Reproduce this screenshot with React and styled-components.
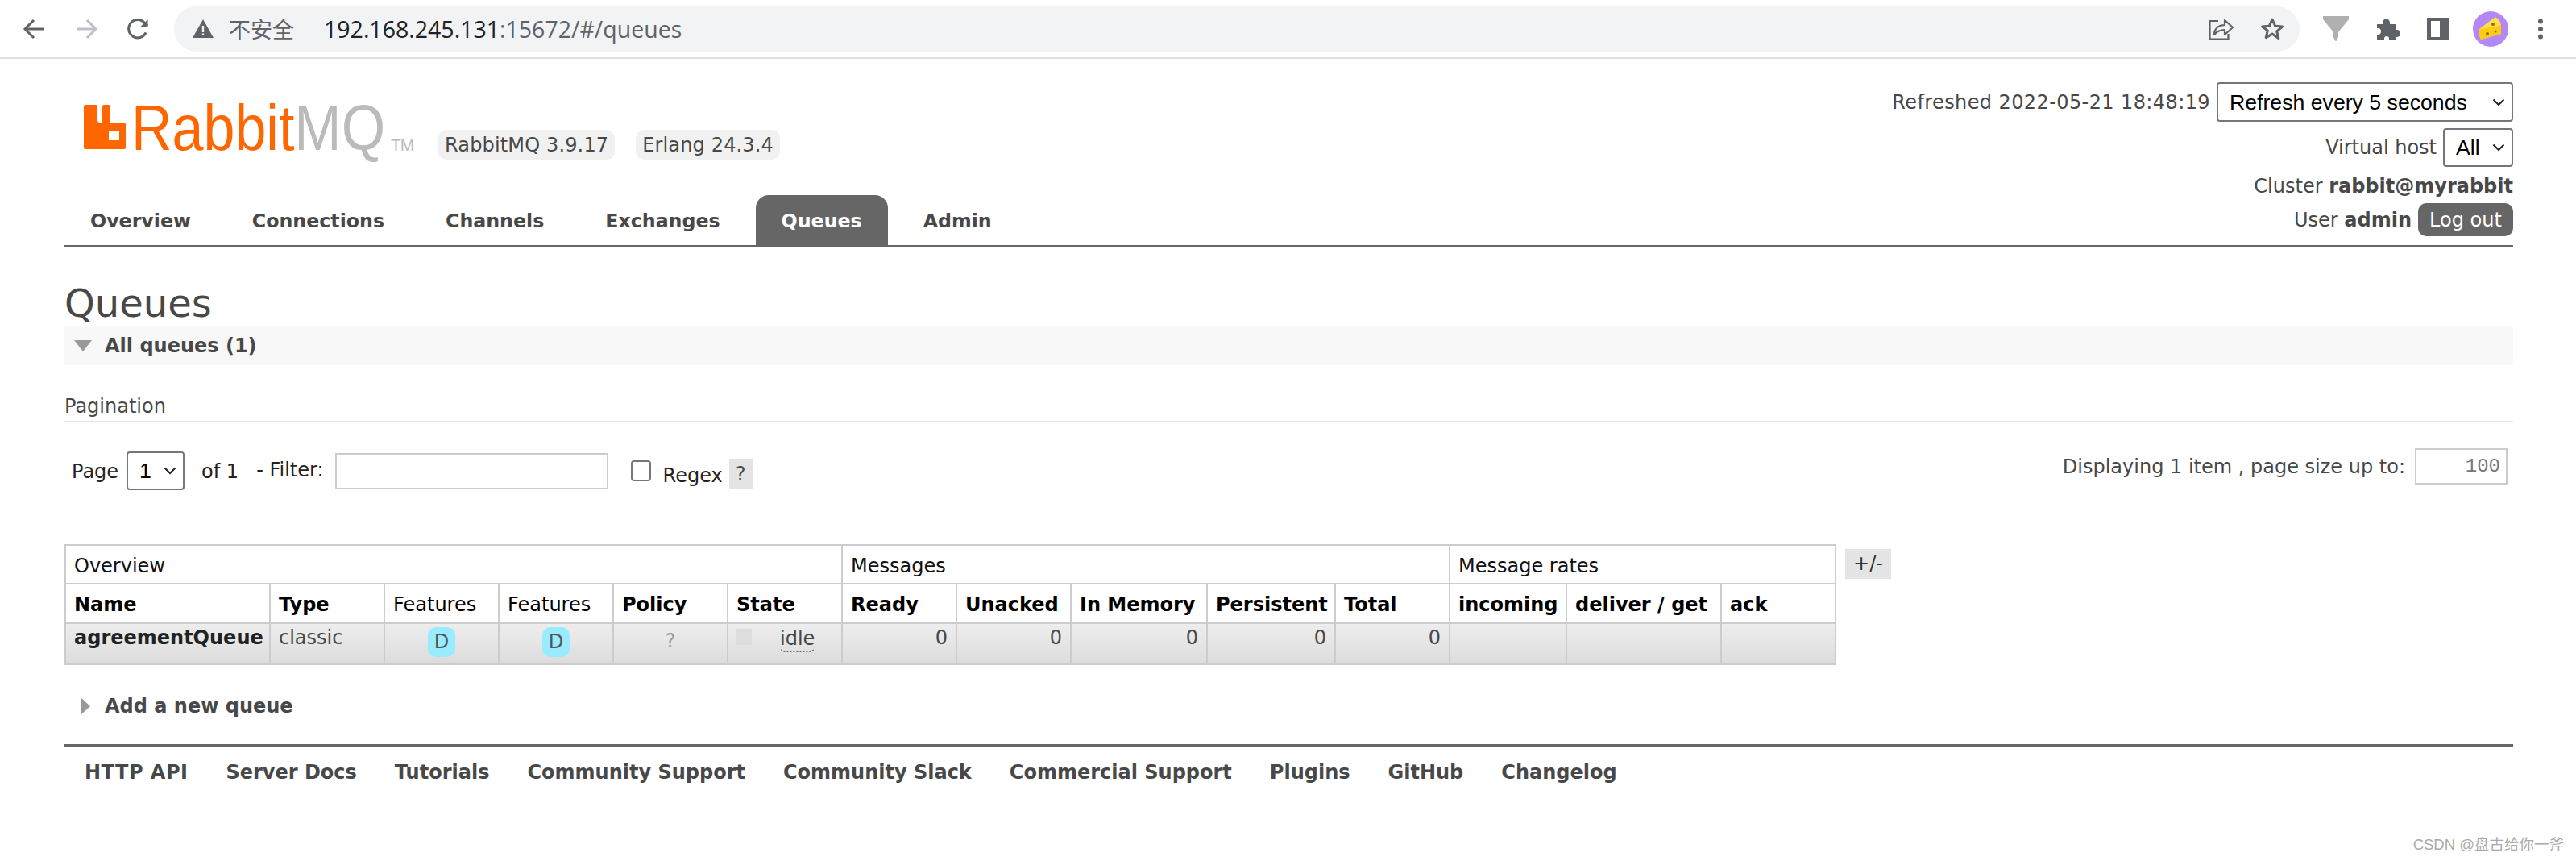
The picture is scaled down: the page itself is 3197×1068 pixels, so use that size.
import React from "react";
import styled, { createGlobalStyle } from "styled-components";

const Global = createGlobalStyle`
  html, body { margin: 0; padding: 0; background: #fff; }
  body { font-family: "DejaVu Sans", Verdana, sans-serif; font-size: 24px; color: #484848; width: 3197px; height: 1068px; overflow: hidden; position: relative; }
`;

const chevron = "url(\"data:image/svg+xml,%3Csvg xmlns='http://www.w3.org/2000/svg' width='16' height='10' viewBox='0 0 16 10'%3E%3Cpath d='M1.5 1.5 8 8l6.5-6.5' fill='none' stroke='%23222' stroke-width='2'/%3E%3C/svg%3E\")";

const ChromeBar = styled.div`
  height: 71px;
  border-bottom: 2px solid #e0e0e0;
  display: flex;
  align-items: center;
  padding-left: 28px;
  box-sizing: content-box;
`;
const NavIcon = styled.svg`
  width: ${p => p.$w || 30}px;
  height: ${p => p.$h || 28}px;
  margin-right: ${p => p.$gap || 34}px;
  flex: none;
`;
const Omnibox = styled.div`
  flex: none;
  height: 56px;
  width: 2638px;
  margin-left: -4px;
  border-radius: 28px;
  background: #f1f3f4;
  display: flex;
  align-items: center;
  padding-left: 23px;
  box-sizing: border-box;
`;
const Insecure = styled.span`
  font: 27px "Noto Sans CJK SC", sans-serif;
  color: #5f6368;
  margin-left: 19px;
  width: 84px;
  white-space: nowrap;
`;
const UrlSep = styled.i`
  display: block;
  width: 1px;
  height: 32px;
  background: #80868b;
  margin: 0 18px 0 15px;
`;
const Url = styled.span`
  font: 28.5px "Open Sans", sans-serif;
  color: #5f6368;
  white-space: nowrap;
  b { font-weight: 400; color: #202124; }
`;
const OmniRight = styled.div`
  margin-left: auto;
  display: flex;
  align-items: center;
  gap: 33px;
  padding-right: 19px;
`;
const ToolIcons = styled.div`
  display: flex;
  align-items: center;
  margin-left: 28px;
`;

const Page = styled.div`
  padding: 0 78px 0 80px;
`;
const Header = styled.header`
  display: flex;
  justify-content: space-between;
  height: 231px;
  border-bottom: 2px solid #666;
  box-sizing: content-box;
`;
const HeaderLeft = styled.div`
  display: flex;
  flex-direction: column;
  justify-content: space-between;
`;
const LogoRow = styled.div`
  display: flex;
  align-items: flex-start;
  padding: 57px 0 0 24px;
`;
const LogoMark = styled.svg`
  width: 52px;
  height: 55px;
  flex: none;
  margin-right: 7px;
`;
const Wordmark = styled.div`
  font-family: "Liberation Sans", sans-serif;
  font-size: 79px;
  line-height: 56px;
  margin-top: 1px;
  color: #f60;
  white-space: nowrap;
  width: 310px;
  transform: scaleX(0.886);
  transform-origin: left center;
  span { color: #bbb; }
`;
const Tm = styled.span`
  font-family: "Liberation Sans", sans-serif;
  font-size: 21px;
  color: #bbb;
  margin: 36px 0 0 12px;
  line-height: 28px;
  width: 59px;
  letter-spacing: -1px;
`;
const Badge = styled.span`
  background: #f1f1f1;
  border-radius: 10px;
  height: 37px;
  line-height: 38px;
  padding: 0 8px;
  font-size: 24px;
  letter-spacing: 0.15px;
  margin: 31px ${p => p.$mr || 0}px 0 0;
  white-space: nowrap;
`;
const Tabs = styled.nav`
  display: flex;
  gap: 12px;
`;
const Tab = styled.a`
  height: 62px;
  line-height: 64px;
  padding: 0 32px;
  font-size: 23.7px;
  font-weight: 700;
  border-radius: 16px 16px 0 0;
  color: ${p => (p.$active ? "#fff" : "#484848")};
  background: ${p => (p.$active ? "#666" : "transparent")};
`;
const HeaderRight = styled.div`
  display: flex;
  flex-direction: column;
  align-items: flex-end;
  padding-top: 29px;
`;
const MetaRow = styled.div`
  display: flex;
  align-items: center;
  justify-content: flex-end;
  gap: 8px;
  height: ${p => p.$h}px;
  margin-bottom: ${p => p.$mb || 0}px;
  letter-spacing: ${p => p.$ls || 0}px;
  white-space: nowrap;
  b { font-weight: 700; }
`;
const NativeSelect = styled.select`
  appearance: none;
  font: 26.67px "Liberation Sans", Arial, sans-serif;
  letter-spacing: 0;
  color: #000;
  background: #fff ${chevron} no-repeat right 8px center;
  border: 2px solid #767676;
  border-radius: 4px;
  width: ${p => p.$w}px;
  height: ${p => p.$h}px;
  padding: 0 0 0 14px;
  margin: 0;
  box-sizing: border-box;
  flex: none;
`;
const LogoutBtn = styled.button`
  width: 118px;
  height: 41px;
  background: #666;
  color: #fff;
  border: 0;
  border-radius: 10px;
  font: 24px "DejaVu Sans", sans-serif;
  padding: 0;
`;
const Title = styled.h1`
  font-size: 48px;
  font-weight: 400;
  line-height: 56px;
  margin: 0;
  padding-top: 42px;
  height: 56px;
  box-sizing: content-box;
`;
const SectionHead = styled.div`
  height: 49px;
  background: #f8f8f8;
  display: flex;
  align-items: center;
  font-weight: 700;
  padding-left: 12px;
`;
const PlainHead = styled(SectionHead)`
  background: transparent;
  padding-left: 20px;
`;
const DownArrow = styled.i`
  border-left: 11px solid transparent;
  border-right: 11px solid transparent;
  border-top: 14px solid #999;
  margin: 0 16px 0 0;
`;
const RightArrow = styled.i`
  border-top: 11px solid transparent;
  border-bottom: 11px solid transparent;
  border-left: 12px solid #999;
  margin-right: 18px;
`;
const SubTitle = styled.h3`
  font-size: 24px;
  font-weight: 400;
  margin: 34px 0 0;
  height: 35px;
  line-height: 34px;
  border-bottom: 2px solid #e4e4e4;
`;
const PagerRow = styled.div`
  display: flex;
  justify-content: space-between;
  align-items: flex-start;
  height: 151px;
`;
const PagerLeft = styled.div`
  display: flex;
  align-items: flex-start;
  padding: 36px 0 0 9px;
  color: #222;
`;
const PagerText = styled.span`
  line-height: 30px;
  margin: ${p => p.$mt}px ${p => p.$mr}px 0 ${p => p.$ml}px;
  color: #222;
  white-space: nowrap;
`;
const FilterInput = styled.input`
  width: 339px;
  height: 45px;
  border: 2px solid #ccc;
  box-sizing: border-box;
  margin: 2px 0 0 0;
  padding: 0 6px;
  background: #fff;
`;
const Checkbox = styled.input`
  appearance: none;
  width: 25px;
  height: 26px;
  border: 2px solid #767676;
  border-radius: 4px;
  box-sizing: border-box;
  background: #fff;
  margin: 11px 15px 0 28px;
`;
const Help = styled.span`
  width: 29px;
  height: 37px;
  line-height: 38px;
  text-align: center;
  background: #e4e4e4;
  margin: 9px 0 0 8px;
  color: #484848;
`;
const PagerRight = styled.div`
  display: flex;
  align-items: center;
  padding: 32px 7px 0 0;
  gap: 12px;
`;
const SizeInput = styled.input`
  width: 115px;
  height: 45px;
  border: 2px solid #ccc;
  box-sizing: border-box;
  text-align: right;
  font: 24px "Liberation Mono", monospace;
  color: #777;
  padding: 0 7px 0 0;
  margin: 0;
`;
const TableRow = styled.div`
  display: flex;
  align-items: flex-start;
  gap: 11px;
`;
const Table = styled.table`
  border-collapse: collapse;
  table-layout: fixed;
  width: 2198px;
  border: 2px solid #ccc;
  margin: 0;
`;
const GroupTh = styled.th`
  box-sizing: border-box;
  font-weight: 400;
  color: #111;
  text-align: left;
  height: 48px;
  padding: 4px 10px 0;
  border: 2px solid #ccc;
  white-space: nowrap;
`;
const ColTh = styled.th`
  box-sizing: border-box;
  font-weight: ${p => (p.$plain ? 400 : 700)};
  color: #000;
  text-align: left;
  height: 48px;
  padding: 4px 10px 0;
  border-left: 2px solid #ccc;
  border-right: 2px solid #ccc;
  border-top: 2px solid #ccc;
  border-bottom: 3px solid #ccc;
  white-space: nowrap;
`;
const DataRow = styled.tr`
  background: linear-gradient(#eeeeee, #dcdcdc);
`;
const Td = styled.td`
  box-sizing: border-box;
  height: 51px;
  padding: 0 10px ${p => p.$pb ?? 13}px;
  border: 2px solid #ccc;
  border-bottom-width: 3px;
  text-align: ${p => p.$align || "left"};
  white-space: nowrap;
  font-weight: ${p => (p.$bold ? 700 : 400)};
  color: ${p => (p.$bold ? "#222" : "#484848")};
  background: transparent;
`;
const FeatureBadge = styled.span`
  display: inline-block;
  width: 34px;
  height: 37px;
  line-height: 37px;
  border-radius: 10px;
  background: #99ebff;
  color: #555;
  text-align: center;
  vertical-align: middle;
`;
const Muted = styled.span`
  color: #999;
`;
const StateCell = styled.div`
  display: flex;
  align-items: center;
`;
const StateDot = styled.i`
  width: 19px;
  height: 20px;
  background: #ddd;
  margin: -6px 35px 0 0;
`;
const Idle = styled.span`
  line-height: 30px;
  border-bottom: 2px dotted #666;
  border-radius: 0 0 6px 6px;
`;
const PlusMinus = styled.span`
  width: 57px;
  height: 37px;
  line-height: 36px;
  text-align: center;
  background: #e4e4e4;
  color: #333;
  margin-top: 6px;
`;
const AddSection = styled.div`
  padding-top: 27px;
  height: 71px;
  box-sizing: content-box;
`;
const Footer = styled.footer`
  border-top: 3px solid #666;
  display: flex;
  gap: 47px;
  padding: 17px 0 0 25px;
  font-weight: 700;
  line-height: 30px;
  white-space: nowrap;
`;
const FooterLink = styled.a`
  color: #484848;
  &:first-child { letter-spacing: 0.5px; }
`;
const Watermark = styled.div`
  position: absolute;
  right: 15px;
  bottom: 9px;
  font: 18.5px "Liberation Sans", "Noto Sans CJK SC", sans-serif;
  color: #aaa;
  white-space: nowrap;
`;

const tabs = ["Overview", "Connections", "Channels", "Exchanges", "Queues", "Admin"];
const widths = [254, 142, 142, 142, 142, 142, 142, 142, 169, 159, 142, 145, 192, 142];
const footer = ["HTTP API", "Server Docs", "Tutorials", "Community Support", "Community Slack", "Commercial Support", "Plugins", "GitHub", "Changelog"];

export default function App() {
  return (
    <>
      <Global />
      <ChromeBar>
        <NavIcon viewBox="0 0 30 28" $gap={34}>
          <path d="M27 14H5M14 3 3 14l11 11" fill="none" stroke="#5f6368" strokeWidth="3" />
        </NavIcon>
        <NavIcon viewBox="0 0 30 28" $gap={34}>
          <path d="M3 14h22M16 3l11 11-11 11" fill="none" stroke="#bcbfc3" strokeWidth="3" />
        </NavIcon>
        <NavIcon viewBox="0 0 30 28" $gap={34}>
          <path d="M25 18.5A11.2 11.2 0 1 1 23.5 6.5L27 10" fill="none" stroke="#5f6368" strokeWidth="3" />
          <path d="M27.5 2v10h-10z" fill="#5f6368" />
        </NavIcon>
        <Omnibox>
          <svg width="26" height="23" viewBox="0 0 26 23">
            <path d="M13 0 26 23H0Z" fill="#5f6368" />
            <path d="M11.8 8h2.4v8h-2.4zM11.8 17.5h2.4V20h-2.4z" fill="#f1f3f4" />
          </svg>
          <Insecure>不安全</Insecure>
          <UrlSep />
          <Url><b>192.168.245.131</b>:15672/#/queues</Url>
          <OmniRight>
            <svg width="31" height="29" viewBox="0 0 31 29">
              <path d="M12 5H1.5v22.5h23V21" fill="none" stroke="#5f6368" strokeWidth="2.2" />
              <path d="M7 22c0-8 6-12 13-12V4l10 9-10 9v-6c-5 0-9 1-13 6Z" fill="none" stroke="#5f6368" strokeWidth="2.2" strokeLinejoin="round" />
            </svg>
            <svg width="30" height="29" viewBox="0 0 30 29">
              <path d="M15 3l3.6 8.2 8.9.8-6.8 5.9 2.1 8.7L15 21.1 7.2 25.6l2.1-8.7L2.5 12l8.9-.8Z" fill="none" stroke="#5f6368" strokeWidth="3" strokeLinejoin="round" />
            </svg>
          </OmniRight>
        </Omnibox>
        <ToolIcons>
          <NavIcon viewBox="0 0 34 32" $gap={32} $w={34} $h={32}>
            <path d="M1 0h32v4L20 20v6l-2.500 5H16.500L14 26v-6L1 4Z" fill="#b0b0b0" />
          </NavIcon>
          <NavIcon viewBox="0 0 30 28" $gap={34}>
            <path d="M2 8h7V6a4.500 4.500 0 0 1 9 0v2h7v7h2a4.500 4.500 0 0 1 0 9h-2v4H17v-2a3 3 0 0 0-6 0v2H2v-7h1a4 4 0 0 0 0-8H2Z" fill="#5f6368" />
          </NavIcon>
          <NavIcon viewBox="0 0 28 28" $gap={29} $w={28}>
            <path fillRule="evenodd" d="M0 0h28v28H0ZM5 4v20h11V4Z" fill="#5f6368" />
          </NavIcon>
          <NavIcon viewBox="0 0 44 44" $gap={36} $w={44} $h={44}>
            <circle cx="22" cy="22" r="22" fill="#b388f5" />
            <path d="M8 22 28 7c3 2 7 6 7 11v10L10 35c-2-4-3-8-2-13Z" fill="#fde047" />
            <path d="M8 22c9-1 19-3 27-5v11L10 35c-2-4-3-8-2-13Z" fill="#facc15" />
            <circle cx="25" cy="16" r="2" fill="#a16207" />
            <circle cx="18" cy="28" r="2" fill="#a16207" />
            <circle cx="28" cy="25" r="1.500" fill="#a16207" />
          </NavIcon>
          <svg width="8" height="26" viewBox="0 0 8 26">
            <circle cx="4" cy="3.500" r="3" fill="#5f6368" />
            <circle cx="4" cy="13" r="3" fill="#5f6368" />
            <circle cx="4" cy="22.500" r="3" fill="#5f6368" />
          </svg>
        </ToolIcons>
      </ChromeBar>
      <Page>
        <Header>
          <HeaderLeft>
            <LogoRow>
              <LogoMark viewBox="0 0 52 55">
                <path fillRule="evenodd" fill="#f60" d="M2 0h13a2 2 0 0 1 2 2v17a3 3 0 0 0 3 3h1a2 2 0 0 0 2-2V2a2 2 0 0 1 2-2h6a2 2 0 0 1 2 2v20h17a2 2 0 0 1 2 2v29a2 2 0 0 1-2 2H2a2 2 0 0 1-2-2V2a2 2 0 0 1 2-2ZM31 33v11h13V33Z" />
              </LogoMark>
              <Wordmark>Rabbit<span>MQ</span></Wordmark>
              <Tm>TM</Tm>
              <Badge $mr={26}>RabbitMQ 3.9.17</Badge>
              <Badge>Erlang 24.3.4</Badge>
            </LogoRow>
            <Tabs>
              {tabs.map(t => <Tab key={t} $active={t === "Queues"}>{t}</Tab>)}
            </Tabs>
          </HeaderLeft>
          <HeaderRight>
            <MetaRow $h={49} $mb={8} $ls={0.4}>
              Refreshed 2022-05-21 18:48:19
              <NativeSelect $w={368} $h={49} defaultValue="5">
                <option value="5">Refresh every 5 seconds</option>
              </NativeSelect>
            </MetaRow>
            <MetaRow $h={48} $mb={2}>
              Virtual host
              <NativeSelect $w={87} $h={48} defaultValue="all">
                <option value="all">All</option>
              </NativeSelect>
            </MetaRow>
            <MetaRow $h={43}><span>Cluster <b>rabbit@myrabbit</b></span></MetaRow>
            <MetaRow $h={41}>
              <span>User <b>admin</b></span>
              <LogoutBtn>Log out</LogoutBtn>
            </MetaRow>
          </HeaderRight>
        </Header>
        <Title>Queues</Title>
        <SectionHead><DownArrow />All queues (1)</SectionHead>
        <SubTitle>Pagination</SubTitle>
        <PagerRow>
          <PagerLeft>
            <PagerText $mt={10} $mr={10} $ml={0}>Page</PagerText>
            <NativeSelect $w={72} $h={48} defaultValue="1">
              <option value="1">1</option>
            </NativeSelect>
            <PagerText $mt={10} $mr={22} $ml={21}>of 1</PagerText>
            <PagerText $mt={8} $mr={14} $ml={0}>- Filter:</PagerText>
            <FilterInput />
            <Checkbox type="checkbox" />
            <PagerText $mt={15} $mr={0} $ml={0}>Regex</PagerText>
            <Help>?</Help>
          </PagerLeft>
          <PagerRight>
            Displaying 1 item , page size up to:
            <SizeInput defaultValue="100" />
          </PagerRight>
        </PagerRow>
        <TableRow>
          <Table>
            <colgroup>
              {widths.map((w, i) => <col key={i} style={{ width: w }} />)}
            </colgroup>
            <thead>
              <tr>
                <GroupTh colSpan={6}>Overview</GroupTh>
                <GroupTh colSpan={5}>Messages</GroupTh>
                <GroupTh colSpan={3}>Message rates</GroupTh>
              </tr>
              <tr>
                <ColTh>Name</ColTh>
                <ColTh>Type</ColTh>
                <ColTh $plain>Features</ColTh>
                <ColTh $plain>Features</ColTh>
                <ColTh>Policy</ColTh>
                <ColTh>State</ColTh>
                <ColTh>Ready</ColTh>
                <ColTh>Unacked</ColTh>
                <ColTh>In Memory</ColTh>
                <ColTh>Persistent</ColTh>
                <ColTh>Total</ColTh>
                <ColTh>incoming</ColTh>
                <ColTh>deliver / get</ColTh>
                <ColTh>ack</ColTh>
              </tr>
            </thead>
            <tbody>
              <DataRow>
                <Td $bold>agreementQueue</Td>
                <Td>classic</Td>
                <Td $align="center" $pb={2}><FeatureBadge>D</FeatureBadge></Td>
                <Td $align="center" $pb={2}><FeatureBadge>D</FeatureBadge></Td>
                <Td $align="center" $pb={6}><Muted>?</Muted></Td>
                <Td $pb={9}><StateCell><StateDot /><Idle>idle</Idle></StateCell></Td>
                <Td $align="right">0</Td>
                <Td $align="right">0</Td>
                <Td $align="right">0</Td>
                <Td $align="right">0</Td>
                <Td $align="right">0</Td>
                <Td />
                <Td />
                <Td />
              </DataRow>
            </tbody>
          </Table>
          <PlusMinus>+/-</PlusMinus>
        </TableRow>
        <AddSection>
          <PlainHead><RightArrow />Add a new queue</PlainHead>
        </AddSection>
        <Footer>
          {footer.map(f => <FooterLink key={f}>{f}</FooterLink>)}
        </Footer>
      </Page>
      <Watermark>CSDN @盘古给你一斧</Watermark>
    </>
  );
}
